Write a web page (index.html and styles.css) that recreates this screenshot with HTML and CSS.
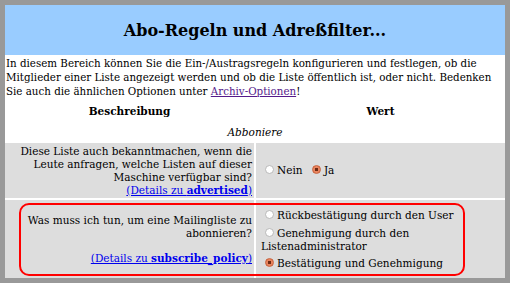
FILE: index.html
```html
<!DOCTYPE html>
<html>
<head>
<meta charset="utf-8">
<link rel="stylesheet" href="styles.css">
</head>
<body>
<div class="frame">
  <div class="banner">
    <h1>Abo-Regeln und Adreßfilter...</h1>
  </div>

  <p class="intro">In diesem Bereich können Sie die Ein-/Austragsregeln konfigurieren und festlegen, ob die Mitglieder einer Liste angezeigt werden und ob die Liste öffentlich ist, oder nicht. Bedenken Sie auch die ähnlichen Optionen unter <a href="#" class="visited">Archiv-Optionen</a>!</p>

  <table class="opts">
    <thead>
      <tr>
        <th>Beschreibung</th>
        <th>Wert</th>
      </tr>
    </thead>
    <tbody>
      <tr>
        <td colspan="2" class="section">Abboniere</td>
      </tr>
      <tr class="row">
        <td class="desc">Diese Liste auch bekanntmachen, wenn die Leute anfragen, welche Listen auf dieser Maschine verfügbar sind?<br>
          <a href="#">(Details zu <b>advertised</b>)</a></td>
        <td class="val">
          <label><input type="radio" name="advertised" value="0">Nein</label>
          <label class="gap"><input type="radio" name="advertised" value="1" checked>Ja</label>
        </td>
      </tr>
      <tr class="row">
        <td class="desc">Was muss ich tun, um eine Mailingliste zu abonnieren?<br><br>
          <a href="#">(Details zu <b>subscribe_policy</b>)</a></td>
        <td class="val list">
          <label><input type="radio" name="subscribe_policy" value="1">Rückbestätigung durch den User</label>
          <label><input type="radio" name="subscribe_policy" value="2">Genehmigung durch den Listenadministrator</label>
          <label><input type="radio" name="subscribe_policy" value="3" checked>Bestätigung und Genehmigung</label>
        </td>
      </tr>
    </tbody>
  </table>

  <!-- highlight box drawn over the subscribe_policy row -->
  <div class="highlight"></div>
</div>
</body>
</html>
```

FILE: styles.css
```css
* {
  box-sizing: border-box;
}

body {
  margin: 0;
  background-color: #999999;
  font-family: "DejaVu Serif", serif;
  color: #000;
}

.frame {
  position: relative;
  margin: 5px;
  height: 273px;
  overflow: hidden;
  background-color: #fff;
}

.banner {
  height: 50px;
  background-color: #99ccff;
  display: flex;
  align-items: center;
  justify-content: center;
}

.banner h1 {
  margin: 0;
  font-size: 16px;
  font-weight: bold;
}

.intro {
  margin: 1px 0 0 1px;
  font-size: 10.3px;
  line-height: 14px;
}

a {
  color: #0000ee;
}

a.visited {
  color: #551a8b;
}

.opts {
  border-collapse: separate;
  border-spacing: 2px;
  width: calc(100% + 4px);
  margin: 1px -2px 0;
  font-size: 10.5px;
  line-height: 12.7px;
}

.opts th {
  width: 50%;
  padding: 4px 2px;
  text-align: center;
}

.section {
  text-align: center;
  font-style: italic;
  padding: 2.5px 2px;
}

.row td {
  background-color: #dddddd;
  padding: 2px 2px;
}

.desc {
  text-align: right;
}

.row .val {
  padding-left: 5px;
}

.val input {
  appearance: none;
  -webkit-appearance: none;
  width: 9px;
  height: 9px;
  margin: 0 3px 0 4px;
  border: 1px solid #b8b8b8;
  border-radius: 50%;
  background: #fff;
  vertical-align: 0;
}

.val input:checked {
  border-color: #c8603a;
  background: radial-gradient(circle, #6b2a14 0 1.5px, #e8845e 2px);
}

.val .gap {
  margin-left: 2px;
}

.row .list {
  padding-top: 4px;
  padding-bottom: 4px;
}

.list label {
  display: block;
  margin: 5px 0;
}

.highlight {
  position: absolute;
  left: 14px;
  top: 198px;
  width: 446px;
  height: 73px;
  border: 2px solid #ff0000;
  border-radius: 10px;
}
```
